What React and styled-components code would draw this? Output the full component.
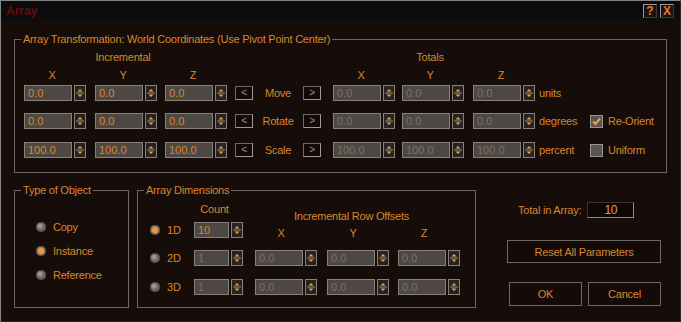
import React from 'react';
import styled, { createGlobalStyle } from 'styled-components';

const ORANGE = '#d8872c';
const DIM = '#78726d';
const EDGE = '#6d6762';

const GlobalStyle = createGlobalStyle`
  html, body { margin: 0; padding: 0; background: #150b09; }
  body {
    font-family: "Liberation Sans", Arial, sans-serif;
    font-size: 11px;
    letter-spacing: -0.22px;
    color: ${ORANGE};
  }
  * { box-sizing: border-box; }
`;

const Window = styled.div`
  width: 681px;
  height: 322px;
  background: #160c0a;
  border: 1px solid #858585;
  border-right-color: #2a2a2a;
  border-bottom-color: #2a2a2a;
  display: flex;
  flex-direction: column;
`;

const TitleBar = styled.div`
  height: 20px;
  flex: none;
  background: #0c0b0e;
  display: flex;
  align-items: center;
  justify-content: space-between;
  padding: 0 6px 0 5px;
`;

const Title = styled.span`
  font-weight: 700;
  font-size: 12px;
  letter-spacing: 0;
  color: #6e0909;
`;

const TitleButtons = styled.div`
  display: flex;
  gap: 3px;
`;

const TitleButton = styled.div`
  width: 14px;
  height: 14px;
  border: 1px solid;
  border-color: #9a9a9a #3a3a3a #3a3a3a #9a9a9a;
  background: #1a1411;
  color: #e2782e;
  font-weight: 700;
  font-size: 12px;
  line-height: 12px;
  letter-spacing: 0;
  text-align: center;
`;

const Body = styled.div`
  padding: 12px 13px 0;
  display: flex;
  flex-direction: column;
`;

const Group = styled.fieldset`
  margin: 0;
  padding: 0;
  border: 1px solid ${EDGE};
  min-width: 0;
  width: ${({ $w }) => ($w ? `${$w}px` : 'auto')};
  height: ${({ $h }) => ($h ? `${$h}px` : 'auto')};
  margin-left: ${({ $ml }) => $ml || 0}px;
`;

const Legend = styled.legend`
  margin-left: 6px;
  padding: 0 2px;
  line-height: 12px;
  font-size: 11px;
  color: ${ORANGE};
`;

const TransformContent = styled.div`
  padding: 0 0 14px 9px;
  display: flex;
  flex-direction: column;
`;

const Row = styled.div`
  display: grid;
  grid-template-columns: 71px 70px 70px 18px 50px 30px 69px 71px 66px 51px auto;
  align-items: center;
  height: ${({ $h }) => $h || 16}px;
  margin-top: ${({ $mt }) => $mt || 0}px;
`;

const FieldLabel = styled.div`
  width: 62px;
  padding-right: 6px;
  text-align: center;
  line-height: 12px;
  grid-column: ${({ $col }) => $col};
`;

const FieldWrap = styled.div`
  display: flex;
  gap: 2px;
  height: 16px;
`;

const Input = styled.div`
  width: ${({ $w }) => $w || 48}px;
  height: 16px;
  border: 1px solid #87817c;
  background: #4e4845;
  color: ${({ $off }) => ($off ? DIM : ORANGE)};
  padding-left: 3px;
  line-height: 14px;
  font-size: 11px;
  letter-spacing: 0;
  white-space: nowrap;
  overflow: hidden;
`;

const SpinBox = styled.div`
  width: 12px;
  height: 16px;
  border: 1px solid #87817c;
  background: #2a2220;
  display: flex;
`;

const StepButton = styled.div`
  width: 18px;
  height: 14px;
  border: 1px solid;
  border-color: #6f6a66 #a09a95 #a09a95 #6f6a66;
  background: #140b09;
  color: #a8927e;
  font-size: 10px;
  line-height: 11px;
  text-align: center;
`;

const RowName = styled.div`
  text-align: center;
  color: ${ORANGE};
`;

const Unit = styled.div``;

const CheckRow = styled.div`
  display: flex;
  align-items: center;
  gap: 5px;
`;

const CheckBox = styled.div`
  width: 13px;
  height: 13px;
  border: 1px solid #9a948f;
  background: #5b5551;
  display: flex;
`;

const BottomRow = styled.div`
  display: flex;
  align-items: flex-start;
  margin-top: 11px;
`;

const RadioList = styled.div`
  display: flex;
  flex-direction: column;
  gap: 10px;
  padding: 24px 0 0 21px;
`;

const RadioRow = styled.div`
  display: flex;
  align-items: center;
  gap: 7px;
  height: 14px;
  padding-left: ${({ $pl }) => $pl || 0}px;
`;

const RadioDot = styled.span`
  width: 10px;
  height: 10px;
  border-radius: 50%;
  flex: none;
  background: ${({ $on }) =>
    $on
      ? 'radial-gradient(circle at 50% 50%, #f0962a 0 2.6px, #8d8782 3.4px 100%)'
      : 'radial-gradient(circle at 40% 40%, #9c9691 0 1.5px, #6f6a66 3.5px 100%)'};
  box-shadow: inset 0 0 0 1px #4c4744;
`;

const DimsGrid = styled.div`
  display: grid;
  grid-template-columns: 48px 61px 72px 71px 62px;
  grid-template-rows: 14px 16px 16px 16px;
  row-gap: 12px;
  padding-left: 8px;
  align-items: center;
`;

const CountLabel = styled.div`
  grid-column: 2;
  grid-row: 1;
  width: 41px;
  text-align: center;
  align-self: start;
  padding-top: 7px;
  line-height: 12px;
`;

const OffsetsLabel = styled.div`
  grid-column: 3 / 6;
  grid-row: 1;
  text-align: center;
  padding-right: 12px;
  align-self: end;
  line-height: 12px;
  margin-bottom: -12px;
`;

const AxisLabel = styled.div`
  grid-column: ${({ $col }) => $col};
  grid-row: 2;
  width: 52px;
  text-align: center;
  align-self: end;
  line-height: 12px;
  margin-bottom: -1px;
`;

const DimCell = styled.div`
  grid-column: ${({ $col }) => $col};
  grid-row: ${({ $row }) => $row};
  margin-top: ${({ $mt }) => $mt || 0}px;
`;

const RightCol = styled.div`
  display: flex;
  flex-direction: column;
  align-items: flex-start;
  padding-left: 31px;
`;

const TotalRow = styled.div`
  display: flex;
  align-items: center;
  gap: 6px;
  margin: 18px 0 0 11px;
`;

const TotalBox = styled.div`
  width: 47px;
  height: 16px;
  border: 1px solid;
  border-color: #3a3230 #8f8a86 #8f8a86 #3a3230;
  background: #0d0706;
  color: #e29a4a;
  text-align: center;
  line-height: 14px;
  font-size: 12px;
`;

const Button = styled.div`
  width: ${({ $w }) => $w}px;
  height: ${({ $h }) => $h}px;
  margin-top: ${({ $mt }) => $mt || 0}px;
  border: 1px solid #6f6965;
  background: #140b09;
  color: ${ORANGE};
  display: flex;
  align-items: center;
  justify-content: center;
`;

const ButtonRow = styled.div`
  display: flex;
  gap: 6px;
  margin: 19px 0 0 2px;
`;

function Arrows() {
  return (
    <svg width="10" height="14" viewBox="0 0 10 14">
      <path d="M2.5 5.5 L5 3 L7.5 5.5 Z" fill="#dca257" />
      <line x1="1" y1="7" x2="9" y2="7" stroke="#a9875c" strokeWidth="1" />
      <path d="M2.5 8.5 L7.5 8.5 L5 11 Z" fill="#dca257" />
    </svg>
  );
}

function Field({ value, off, w }) {
  return (
    <FieldWrap>
      <Input $off={off} $w={w}>{value}</Input>
      <SpinBox>
        <Arrows />
      </SpinBox>
    </FieldWrap>
  );
}

function Check({ on, label }) {
  return (
    <CheckRow>
      <CheckBox>
        {on && (
          <svg width="11" height="11" viewBox="0 0 11 11">
            <path d="M2 5.5 L4.5 8 L9 2.5" fill="none" stroke="#eda23a" strokeWidth="2" />
          </svg>
        )}
      </CheckBox>
      {label}
    </CheckRow>
  );
}

const rows = [
  { name: 'Move', inc: '0.0', tot: '0.0', unit: 'units' },
  { name: 'Rotate', inc: '0.0', tot: '0.0', unit: 'degrees', check: { on: true, label: 'Re-Orient' } },
  { name: 'Scale', inc: '100.0', tot: '100.0', unit: 'percent', check: { on: false, label: 'Uniform' } },
];

const dims = [
  { name: '1D', on: true, count: '10' },
  { name: '2D', on: false, count: '1' },
  { name: '3D', on: false, count: '1' },
];

export default function App() {
  return (
    <>
      <GlobalStyle />
      <Window>
        <TitleBar>
          <Title>Array</Title>
          <TitleButtons>
            <TitleButton>?</TitleButton>
            <TitleButton>X</TitleButton>
          </TitleButtons>
        </TitleBar>
        <Body>
          <Group>
            <Legend>Array Transformation: World Coordinates (Use Pivot Point Center)</Legend>
            <TransformContent>
              <Row $h={12} $mt={6}>
                <FieldLabel $col={2}>Incremental</FieldLabel>
                <FieldLabel $col={8}>Totals</FieldLabel>
              </Row>
              <Row $h={12} $mt={6}>
                <FieldLabel $col={1}>X</FieldLabel>
                <FieldLabel $col={2}>Y</FieldLabel>
                <FieldLabel $col={3}>Z</FieldLabel>
                <FieldLabel $col={7}>X</FieldLabel>
                <FieldLabel $col={8}>Y</FieldLabel>
                <FieldLabel $col={9}>Z</FieldLabel>
              </Row>
              {rows.map((r, i) => (
                <Row key={r.name} $mt={[4, 12, 13][i]}>
                  <Field value={r.inc} />
                  <Field value={r.inc} />
                  <Field value={r.inc} />
                  <StepButton>&lt;</StepButton>
                  <RowName>{r.name}</RowName>
                  <StepButton>&gt;</StepButton>
                  <Field value={r.tot} off />
                  <Field value={r.tot} off />
                  <Field value={r.tot} off />
                  <Unit>{r.unit}</Unit>
                  {r.check ? <Check on={r.check.on} label={r.check.label} /> : <span />}
                </Row>
              ))}
            </TransformContent>
          </Group>

          <BottomRow>
            <Group $w={115} $h={124}>
              <Legend>Type of Object</Legend>
              <RadioList>
                <RadioRow><RadioDot />Copy</RadioRow>
                <RadioRow><RadioDot $on />Instance</RadioRow>
                <RadioRow><RadioDot />Reference</RadioRow>
              </RadioList>
            </Group>

            <Group $w={339} $h={124} $ml={8}>
              <Legend>Array Dimensions</Legend>
              <DimsGrid>
                <CountLabel>Count</CountLabel>
                <OffsetsLabel>Incremental Row Offsets</OffsetsLabel>
                {dims.map((d, i) => (
                  <React.Fragment key={d.name}>
                    <DimCell $col={1} $row={i + 2} $mt={i === 2 ? 1 : 0}>
                      <RadioRow $pl={4}><RadioDot $on={d.on} />{d.name}</RadioRow>
                    </DimCell>
                    <DimCell $col={2} $row={i + 2} $mt={i === 2 ? 1 : 0}>
                      <Field value={d.count} off={!d.on} w={35} />
                    </DimCell>
                    {i > 0 &&
                      [3, 4, 5].map((c) => (
                        <DimCell key={c} $col={c} $row={i + 2} $mt={i === 2 ? 1 : 0}>
                          <Field value="0.0" off />
                        </DimCell>
                      ))}
                  </React.Fragment>
                ))}
                <AxisLabel $col={3}>X</AxisLabel>
                <AxisLabel $col={4}>Y</AxisLabel>
                <AxisLabel $col={5}>Z</AxisLabel>
              </DimsGrid>
            </Group>

            <RightCol>
              <TotalRow>
                Total in Array:
                <TotalBox>10</TotalBox>
              </TotalRow>
              <Button $w={154} $h={23} $mt={22}>Reset All Parameters</Button>
              <ButtonRow>
                <Button $w={73} $h={24}>OK</Button>
                <Button $w={73} $h={24}>Cancel</Button>
              </ButtonRow>
            </RightCol>
          </BottomRow>
        </Body>
      </Window>
    </>
  );
}
